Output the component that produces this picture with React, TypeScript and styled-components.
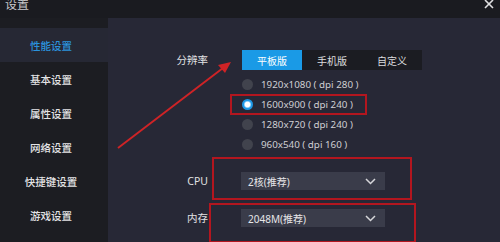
import React from 'react';
import styled, { createGlobalStyle } from 'styled-components';

const GlobalStyle = createGlobalStyle`
  body {
    margin: 0;
    background: #1b1c21;
    font-family: "Noto Sans", "Noto Sans CJK SC", sans-serif;
  }
`;

const Window = styled.div`
  position: relative;
  width: 500px;
  height: 242px;
  overflow: hidden;
  display: flex;
  flex-direction: column;
  background: #272836;
`;

const TitleBar = styled.div`
  height: 18px;
  flex: none;
  display: flex;
  justify-content: space-between;
  align-items: flex-start;
  padding: 0 6px 0 5px;
  background: #1a1b20;
  overflow: hidden;
`;

const Title = styled.span`
  margin-top: -2px;
  font-size: 12px;
  line-height: 13px;
  color: #c9c9cc;
`;

const CloseIcon = styled.svg`
  margin-top: -1px;
`;

const Body = styled.div`
  flex: 1;
  display: flex;
  min-height: 0;
`;

const Sidebar = styled.nav`
  width: 108px;
  flex: none;
  padding-top: 10px;
  background: #1c1d22;
`;

const NavItem = styled.div<{ $active?: boolean }>`
  height: 34px;
  display: flex;
  align-items: center;
  justify-content: center;
  padding-right: 6px;
  font-size: 10.5px;
  font-weight: 500;
  color: ${(p) => (p.$active ? '#2b92dc' : '#e4e4e6')};
  background: ${(p) => (p.$active ? '#262834' : 'transparent')};
`;

const Content = styled.main`
  flex: 1;
  display: flex;
  flex-direction: column;
  padding-top: 32px;
`;

const Row = styled.div<{ $gap?: number }>`
  display: flex;
  align-items: flex-start;
  margin-top: ${(p) => p.$gap ?? 0}px;
`;

const Label = styled.div<{ $top: number }>`
  width: 100px;
  flex: none;
  text-align: right;
  padding-top: ${(p) => p.$top}px;
  font-size: 10.5px;
  line-height: 18px;
  color: #e2e2e4;
`;

const Resolution = styled.div`
  margin-left: 34px;
  display: flex;
  flex-direction: column;
`;

const Tabs = styled.div`
  display: flex;
  background: #1b1c22;
`;

const Tab = styled.div<{ $active?: boolean }>`
  width: 60px;
  height: 20px;
  display: flex;
  align-items: center;
  justify-content: center;
  font-size: 10px;
  color: ${(p) => (p.$active ? '#ffffff' : '#dcdcde')};
  background: ${(p) => (p.$active ? '#1a9ae6' : 'transparent')};
`;

const RadioList = styled.div`
  margin-top: 4px;
  display: flex;
  flex-direction: column;
`;

const RadioRow = styled.div<{ $marked?: boolean }>`
  position: relative;
  height: 20px;
  display: flex;
  align-items: center;
  gap: 8px;
  font-size: 9.8px;
  color: #cfcfd3;

  &::after {
    content: '';
    display: ${(p) => (p.$marked ? 'block' : 'none')};
    position: absolute;
    left: -12px;
    top: 0;
    width: 133px;
    height: 17px;
    border: 2px solid #b3161f;
  }
`;

const RadioDot = styled.span<{ $checked?: boolean }>`
  width: 11px;
  height: 11px;
  border-radius: 50%;
  box-sizing: border-box;
  flex: none;
  background: ${(p) =>
    p.$checked ? 'radial-gradient(circle, #ffffff 0 2.5px, #9fd6fa 3px, #1e98e6 4px)' : '#41434d'};
`;

const Marked = styled.div<{ $pad: string; $left: number }>`
  margin-left: ${(p) => p.$left}px;
  padding: ${(p) => p.$pad};
  border: 2px solid #b3161f;
`;

const Select = styled.div`
  width: 144px;
  height: 18px;
  box-sizing: border-box;
  padding: 0 9px 0 7px;
  display: flex;
  align-items: center;
  justify-content: space-between;
  font-size: 10px;
  color: #e6e6e8;
  background: #3a3c4a;
`;

const Arrow = styled.svg`
  position: absolute;
  left: 0;
  top: 0;
  pointer-events: none;
`;

const Chevron = () => (
  <svg width="11" height="7" viewBox="0 0 11 7">
    <path d="M1 1 L5.5 5.5 L10 1" fill="none" stroke="#d6d6da" strokeWidth="1.5" />
  </svg>
);

const navItems = ['性能设置', '基本设置', '属性设置', '网络设置', '快捷键设置', '游戏设置'];
const resolutions = [
  '1920x1080 ( dpi 280 )',
  '1600x900 ( dpi 240 )',
  '1280x720 ( dpi 240 )',
  '960x540 ( dpi 160 )',
];

const App: React.FC = () => (
  <>
    <GlobalStyle />
    <Window>
      <TitleBar>
        <Title>设置</Title>
        <CloseIcon width="10" height="10" viewBox="0 0 10 10">
          <path d="M1 1 L9 9 M9 1 L1 9" stroke="#e0e0e2" strokeWidth="1.6" />
        </CloseIcon>
      </TitleBar>
      <Body>
        <Sidebar>
          {navItems.map((item, i) => (
            <NavItem key={item} $active={i === 0}>
              {item}
            </NavItem>
          ))}
        </Sidebar>
        <Content>
          <Row>
            <Label $top={1}>分辨率</Label>
            <Resolution>
              <Tabs>
                <Tab $active>平板版</Tab>
                <Tab>手机版</Tab>
                <Tab>自定义</Tab>
              </Tabs>
              <RadioList>
                {resolutions.map((r, i) => (
                  <RadioRow key={r} $marked={i === 1}>
                    <RadioDot $checked={i === 1} />
                    {r}
                  </RadioRow>
                ))}
              </RadioList>
            </Resolution>
          </Row>
          <Row $gap={3}>
            <Label $top={15}>CPU</Label>
            <Marked $left={4} $pad="13px 25px 8px 27px">
              <Select>
                2核(推荐)
                <Chevron />
              </Select>
            </Marked>
          </Row>
          <Row $gap={3}>
            <Label $top={6}>内存</Label>
            <Marked $left={1} $pad="4px 29px 14px 30px">
              <Select>
                2048M(推荐)
                <Chevron />
              </Select>
            </Marked>
          </Row>
        </Content>
      </Body>
      <Arrow width="500" height="242" viewBox="0 0 500 242">
        <line x1="118" y1="148" x2="223" y2="68" stroke="#cf2326" strokeWidth="2" />
        <polygon points="231,62 218,65 225,73" fill="#cf2326" />
      </Arrow>
    </Window>
  </>
);

export default App;
